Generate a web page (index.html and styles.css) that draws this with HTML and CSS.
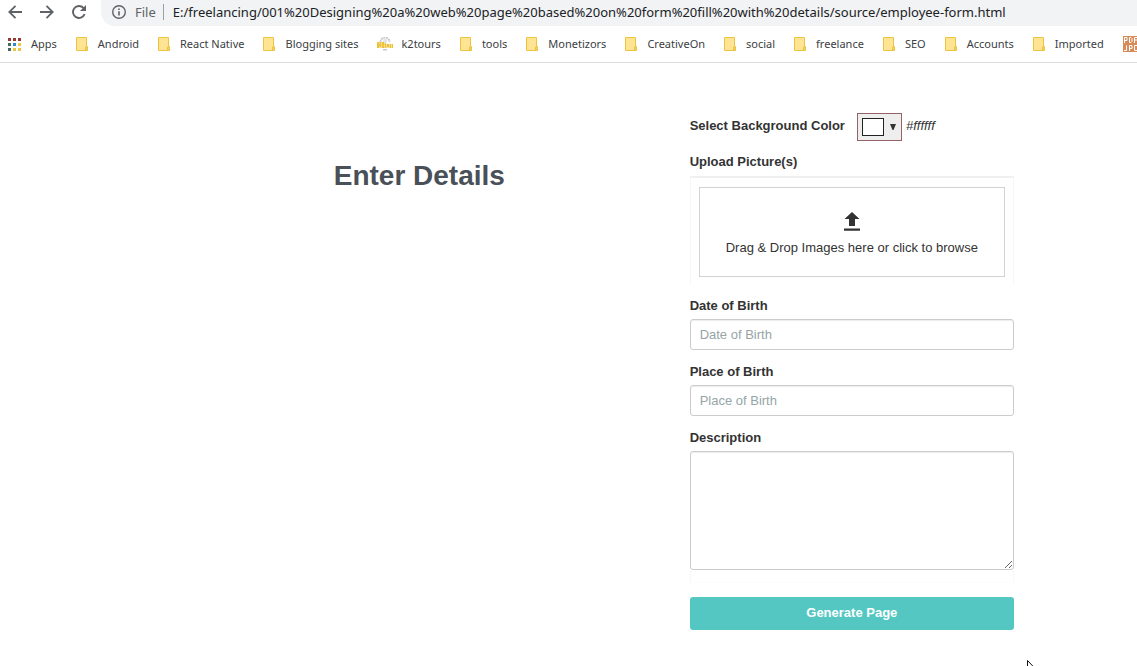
FILE: index.html
```
<!DOCTYPE html>
<html lang="en">
<head>
<meta charset="utf-8">
<meta name="viewport" content="width=device-width, initial-scale=1">
<title>Employee form</title>
<link rel="stylesheet" href="styles.css">
</head>
<body>
<svg class="defs" width="0" height="0" aria-hidden="true">
  <symbol id="folder" viewBox="0 0 12 14">
    <path d="M.5.5h10v9h1v4H.5z" fill="#ffe593" stroke="#ecc440"/>
    <path d="M9.5 13V10h1.500v3z" fill="#ffe593" stroke="#ecc440"/>
  </symbol>
</svg>
<header class="browser">
  <div class="toolbar">
    <button class="nav-button" type="button" aria-label="Back"><svg width="14" height="14" viewBox="0 0 14 14"><path d="M14 7H1.500M7.500 .8 1.300 7l6.200 6.200" fill="none" stroke="#5f6368" stroke-width="1.800"/></svg></button>
    <button class="nav-button" type="button" aria-label="Forward"><svg width="14" height="14" viewBox="0 0 14 14"><path d="M0 7h12.500M6.500.8 12.700 7l-6.200 6.200" fill="none" stroke="#5f6368" stroke-width="1.800"/></svg></button>
    <button class="nav-button" type="button" aria-label="Reload"><svg width="14" height="14" viewBox="0 0 14 14"><path d="M12.600 9.200A6 6 0 1 1 11.400 2.900L12.500 4" fill="none" stroke="#5f6368" stroke-width="1.900"/><path d="M14 0v6H8z" fill="#5f6368"/></svg></button>
    <div class="address">
      <svg class="info" width="14" height="14" viewBox="0 0 14 14"><circle cx="7" cy="7" r="6.300" fill="none" stroke="#5f6368" stroke-width="1.400"/><path d="M6.200 6.200h1.600v4.300H6.200zM6.200 3.500h1.600V5H6.200z" fill="#5f6368"/></svg>
      <span class="scheme">File</span>
      <span class="url">E:/freelancing/001%20Designing%20a%20web%20page%20based%20on%20form%20fill%20with%20details/source/employee-form.html</span>
    </div>
  </div>
  <nav class="bookmarks" aria-label="Bookmarks">
    <a class="bookmark apps" href="#"><svg width="13" height="13" viewBox="0 0 13 13"><path d="M0 0h3v3H0zM5 0h3v3H5zM10 0h3v3h-3z" fill="#9c3632"/><path d="M0 5h3v3H0zM0 10h3v3H0z" fill="#47695b"/><path d="M5 5h3v3H5z" fill="#2f86d6"/><path d="M10 5h3v3h-3zM5 10h3v3H5zM10 10h3v3h-3z" fill="#ecc440"/></svg>Apps</a>
    <a class="bookmark" href="#"><svg width="12" height="14"><use href="#folder"/></svg>Android</a>
    <a class="bookmark" href="#"><svg width="12" height="14"><use href="#folder"/></svg>React Native</a>
    <a class="bookmark" href="#"><svg width="12" height="14"><use href="#folder"/></svg>Blogging sites</a>
    <a class="bookmark site" href="#"><svg width="16" height="14" viewBox="0 0 16 14"><path d="M3.500 5A4.500 4.500 0 0 1 12.500 5" fill="none" stroke="#c9cacc" stroke-width="2" stroke-dasharray="2 .6"/><circle cx="8" cy="4" r="2.200" fill="#e4e4e6"/><path d="M0 5h7v1h2v1h3v-.5h1V7h3v4H0z" fill="#f7df92"/><path d="M0 5h2v2h1V5h1v5H3V9H2v2H0zM5 5h2v3L6 9h1v2H5zM8 6h1v5H8zM10 7h2v3h-2zM13 7h1v4h-1zM15 7h1v4h-1z" fill="#edc03a"/><path d="M6 12h4v1.500H6z" fill="#c9cacc"/></svg>k2tours</a>
    <a class="bookmark" href="#"><svg width="12" height="14"><use href="#folder"/></svg>tools</a>
    <a class="bookmark" href="#"><svg width="12" height="14"><use href="#folder"/></svg>Monetizors</a>
    <a class="bookmark" href="#"><svg width="12" height="14"><use href="#folder"/></svg>CreativeOn</a>
    <a class="bookmark" href="#"><svg width="12" height="14"><use href="#folder"/></svg>social</a>
    <a class="bookmark" href="#"><svg width="12" height="14"><use href="#folder"/></svg>freelance</a>
    <a class="bookmark" href="#"><svg width="12" height="14"><use href="#folder"/></svg>SEO</a>
    <a class="bookmark" href="#"><svg width="12" height="14"><use href="#folder"/></svg>Accounts</a>
    <a class="bookmark" href="#"><svg width="12" height="14"><use href="#folder"/></svg>Imported</a>
    <a class="bookmark pdf" href="#" aria-label="PDF to JPG"><svg width="16" height="16" viewBox="0 0 16 16"><path d="M0 0h16v16H0z" fill="#d68b58"/><path d="M1.500 7V1.500h2.500v3H1.500M6.500 1.500v5h1.500l1-1v-3l-1-1zM11.500 7V1.500H15M11.500 4H14M3.500 9.500v5H1M6.500 15V9.500H9v3H6.500M15 9.500h-3.500v5H15V12" fill="none" stroke="#fff"/></svg></a>
  </nav>
</header>
<main class="page">
  <h1 class="title">Enter Details</h1>
  <form class="form">
    <div class="color-row">
      <label class="color-label" for="color">Select Background Color</label>
      <button class="color-picker" id="color" type="button"><span class="swatch"></span><svg width="6" height="6" viewBox="0 0 6 6"><path d="M0 0h6L3.500 6h-1z" fill="#333"/></svg></button>
      <em class="color-value">#ffffff</em>
    </div>
    <label class="label upload-label" for="pictures">Upload Picture(s)</label>
    <div class="upload">
      <label class="dropzone" for="pictures">
        <svg width="16" height="19" viewBox="0 0 16 19"><path d="M8 0l7.500 7H11v7H5V7H.5zM0 16.500h16v2.200H0z" fill="#333"/></svg>
        <span>Drag &amp; Drop Images here or click to browse</span>
      </label>
      <input class="file" id="pictures" type="file" multiple>
    </div>
    <label class="label" for="dob">Date of Birth</label>
    <input class="control" id="dob" type="text" placeholder="Date of Birth">
    <label class="label" for="pob">Place of Birth</label>
    <input class="control" id="pob" type="text" placeholder="Place of Birth">
    <label class="label" for="description">Description</label>
    <textarea class="control area" id="description"></textarea>
    <div class="preview"></div>
    <button class="submit" type="submit">Generate Page</button>
  </form>
  <svg class="cursor" width="12" height="19" viewBox="0 0 12 19" aria-hidden="true"><path d="M.5.5v15l3.500-3.300 2.300 5.300 2-.9-2.300-5.200H11z" fill="#fff" stroke="#111"/></svg>
</main>
</body>
</html>
```
FILE: styles.css
```
* { box-sizing: border-box; }

body {
  margin: 0;
  min-height: 100vh;
  overflow: hidden;
  background: #fff;
  color: #333;
  font: 13px/18px "Liberation Sans", Arial, sans-serif;
}

.defs { position: absolute; }

svg { flex: none; display: block; }

.browser {
  border-bottom: 1px solid #dadce0;
  font-family: "Noto Sans", "Segoe UI", sans-serif;
}

.toolbar {
  display: flex;
  align-items: center;
  gap: 18px;
  height: 26px;
  padding-left: 8px;
}

.nav-button {
  padding: 0 0 2px;
  border: 0;
  background: none;
}

.address {
  display: flex;
  flex: 1;
  align-items: center;
  height: 26px;
  padding: 0 0 2px 11px;
  border-radius: 0 0 0 14px;
  background: #f1f3f4;
  color: #202124;
  font-size: 13px;
  white-space: nowrap;
}

.nav-button + .address { margin-left: -3px; }

.scheme {
  margin-left: 9px;
  padding-right: 7px;
  border-right: 1px solid #9aa0a6;
  color: #5f6368;
  line-height: 16px;
}

.url { margin-left: 9px; }

.bookmarks {
  display: flex;
  align-items: center;
  gap: 19px;
  height: 36px;
  padding-left: 8px;
  overflow: hidden;
}

.bookmark {
  display: flex;
  flex: none;
  align-items: center;
  gap: 10px;
  color: #3c4043;
  font-size: 11px;
  text-decoration: none;
}

.site { gap: 8px; }

.page {
  position: relative;
  display: grid;
  grid-template-columns: 5fr 3fr;
  align-items: start;
  padding: 50px 123px 36px 149px;
}

.title {
  margin: 47px 0 0;
  color: #495057;
  font-size: 28px;
  line-height: 32px;
  text-align: center;
}

.form {
  display: flex;
  flex-direction: column;
}

.color-row {
  display: flex;
  align-items: center;
  margin-bottom: 12px;
}

.color-label { font-weight: bold; }

.color-label,
.color-value { padding-bottom: 2px; }

.color-picker {
  display: flex;
  align-items: center;
  gap: 6px;
  height: 28px;
  margin: 0 4px 0 12px;
  padding: 0 5px 0 4px;
  border: 1px solid #946267;
  background: #eee;
}

.swatch {
  width: 22px;
  height: 18px;
  border: 1px solid #222;
  background: #fff;
}

.label {
  margin-bottom: 4px;
  font-weight: bold;
}

.upload-label { margin-bottom: 5px; }

.upload {
  margin-bottom: 12px;
  padding: 9px 8px 8px;
  border: 1px solid #f7f7f7;
  border-top: 2px solid #f0f0f0;
  border-bottom: 0;
}

.dropzone {
  display: flex;
  flex-direction: column;
  align-items: center;
  gap: 8px;
  padding: 24px 10px 19px;
  border: 1px solid #d3d3d3;
}

.file { display: none; }

.control {
  width: 100%;
  height: 31px;
  margin: 0 0 13px;
  padding: 0 9px;
  border: 1px solid #ccc;
  border-radius: 3px;
  background: #fff;
  box-shadow: inset 0 1px 1px rgba(0, 0, 0, .075);
  color: #333;
  font: inherit;
}

.control::placeholder { color: #95a5a6; }

.area {
  height: 119px;
  margin: 0;
}

.preview {
  height: 13px;
  margin-bottom: 14px;
  border: 1px solid #f7f7f7;
  border-top: 0;
  border-bottom-color: #fcfcfc;
}

.submit {
  height: 33px;
  padding: 0 0 2px;
  border: 0;
  border-radius: 3px;
  background: #54c7c3;
  color: #fff;
  font: bold 13px/18px "Liberation Sans", Arial, sans-serif;
}

.cursor {
  position: absolute;
  top: 597px;
  left: 1027px;
}
```
